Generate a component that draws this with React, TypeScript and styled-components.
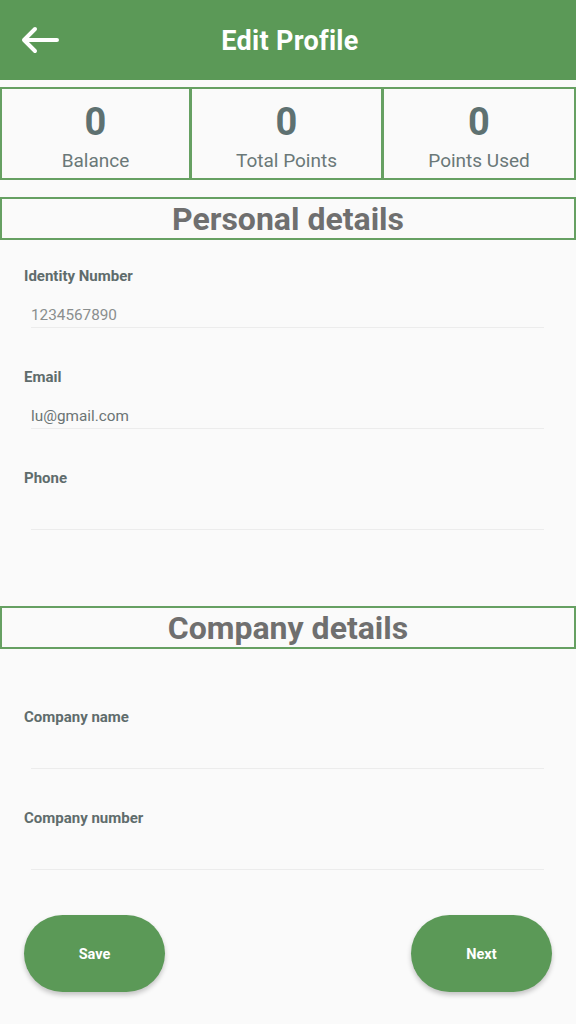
import React from "react";
import styled, { createGlobalStyle } from "styled-components";

const GREEN = "#5b9957";
const LINE = "#66a062";

const Global = createGlobalStyle`
  html, body { margin: 0; padding: 0; background: #fafafa; }
  body { font-family: Roboto, "Noto Sans", sans-serif; }
  * { box-sizing: border-box; }
`;

const Page = styled.div`
  width: 576px;
  height: 1024px;
  background: #fafafa;
  display: flex;
  flex-direction: column;
  overflow: hidden;
`;

const Header = styled.header`
  height: 80px;
  background: ${GREEN};
  display: flex;
  align-items: center;
  justify-content: center;
  position: relative;
`;

const BackButton = styled.button`
  position: absolute;
  left: 18px;
  top: 24px;
  width: 42px;
  height: 32px;
  border: none;
  background: transparent;
  padding: 0;
  display: flex;
  align-items: center;
  justify-content: center;
`;

const Title = styled.h1`
  margin: 0;
  color: #ffffff;
  font-size: 27px;
  font-weight: 700;
  letter-spacing: 0.3px;
  padding-top: 1px;
  padding-left: 4px;
`;

const Stats = styled.div`
  margin-top: 7px;
  display: grid;
  grid-template-columns: 191px 192px 193px;
  height: 93px;
`;

const StatCell = styled.div`
  border: 2px solid ${LINE};
  margin-left: -1px;
  &:first-child { margin-left: 0; }
  display: flex;
  flex-direction: column;
  align-items: center;
  justify-content: flex-start;
  padding-top: 13px;
`;

const StatValue = styled.div`
  font-size: 38px;
  font-weight: 700;
  color: #5e7171;
  line-height: 40px;
`;

const StatLabel = styled.div`
  margin-top: 7px;
  font-size: 19px;
  color: #6a7878;
  line-height: 24px;
`;

const SectionBox = styled.div<{ $top: number }>`
  margin-top: ${(p) => p.$top}px;
  height: 43px;
  border: 2px solid ${LINE};
  display: flex;
  align-items: center;
  justify-content: center;
`;

const SectionTitle = styled.h2`
  margin: 0;
  font-size: 32px;
  font-weight: 700;
  color: #6f6f6f;
  line-height: 36px;
  padding-top: 1px;
`;

const Fields = styled.div<{ $top: number }>`
  padding: ${(p) => p.$top}px 32px 0 24px;
  display: flex;
  flex-direction: column;
  gap: 39px;
`;

const Field = styled.div`
  display: flex;
  flex-direction: column;
`;

const Label = styled.label`
  font-size: 15px;
  font-weight: 700;
  color: #5f6c6c;
  line-height: 20px;
`;

const Value = styled.div<{ $muted?: boolean }>`
  margin-top: 17px;
  margin-left: 7px;
  height: 24px;
  font-size: 15.3px;
  line-height: 24px;
  color: ${(p) => (p.$muted ? "#8a8e8e" : "#6b7474")};
  border-bottom: 1px solid #ececec;
  box-sizing: content-box;
`;

const Footer = styled.div`
  margin-top: auto;
  padding: 0 24px 32px 24px;
  display: flex;
  justify-content: space-between;
`;

const PillButton = styled.button`
  width: 141px;
  height: 77px;
  border-radius: 39px;
  border: none;
  background: ${GREEN};
  color: #ffffff;
  font-family: Roboto, sans-serif;
  font-weight: 700;
  font-size: 14.5px;
  padding-top: 2px;
  box-shadow: 0 3px 5px rgba(0, 0, 0, 0.22);
`;

const Arrow = () => (
  <svg width="40" height="30" viewBox="0 0 40 30">
    <path
      d="M38 15H5M16 4L5 15l11 11"
      fill="none"
      stroke="#ffffff"
      strokeWidth="4"
      strokeLinecap="round"
      strokeLinejoin="round"
    />
  </svg>
);

export default function App() {
  return (
    <Page>
      <Global />
      <Header>
        <BackButton aria-label="Back">
          <Arrow />
        </BackButton>
        <Title>Edit Profile</Title>
      </Header>
      <Stats>
        <StatCell>
          <StatValue>0</StatValue>
          <StatLabel>Balance</StatLabel>
        </StatCell>
        <StatCell>
          <StatValue>0</StatValue>
          <StatLabel>Total Points</StatLabel>
        </StatCell>
        <StatCell>
          <StatValue>0</StatValue>
          <StatLabel>Points Used</StatLabel>
        </StatCell>
      </Stats>
      <SectionBox $top={17}>
        <SectionTitle>Personal details</SectionTitle>
      </SectionBox>
      <Fields $top={26}>
        <Field>
          <Label>Identity Number</Label>
          <Value $muted>1234567890</Value>
        </Field>
        <Field>
          <Label>Email</Label>
          <Value>lu@gmail.com</Value>
        </Field>
        <Field>
          <Label>Phone</Label>
          <Value />
        </Field>
      </Fields>
      <SectionBox $top={76}>
        <SectionTitle>Company details</SectionTitle>
      </SectionBox>
      <Fields $top={58}>
        <Field>
          <Label>Company name</Label>
          <Value />
        </Field>
        <Field>
          <Label>Company number</Label>
          <Value />
        </Field>
      </Fields>
      <Footer>
        <PillButton>Save</PillButton>
        <PillButton>Next</PillButton>
      </Footer>
    </Page>
  );
}
